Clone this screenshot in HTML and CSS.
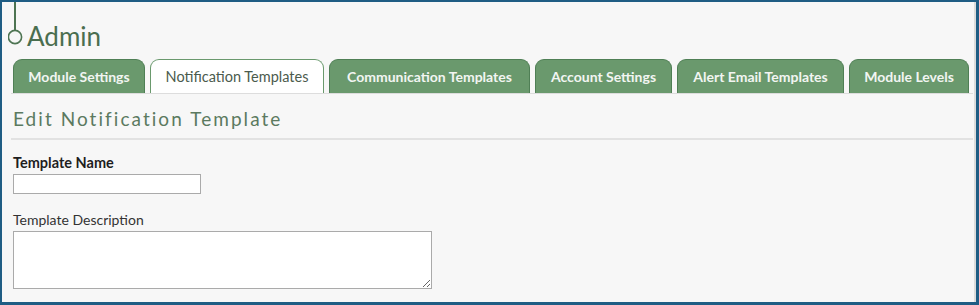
FILE: index.html
```html
<!DOCTYPE html>
<html>
<head>
<meta charset="utf-8">
<link rel="stylesheet" href="styles.css">
</head>
<body>
<div class="frame">
  <header class="title-row">
    <svg class="marker" width="16" height="44" viewBox="0 0 16 44">
      <line x1="7" y1="0" x2="7" y2="28" stroke="#4d7452" stroke-width="2"/>
      <circle cx="7" cy="35" r="6.6" fill="none" stroke="#4d7452" stroke-width="1.6"/>
    </svg>
    <h1 class="title">Admin</h1>
  </header>
  <nav class="tabs">
    <div class="tab">Module Settings</div>
    <div class="tab active">Notification Templates</div>
    <div class="tab">Communication Templates</div>
    <div class="tab">Account Settings</div>
    <div class="tab">Alert Email Templates</div>
    <div class="tab">Module Levels</div>
  </nav>
  <h2 class="section-title">Edit Notification Template</h2>
  <form class="form">
    <label class="field-label bold">Template Name</label>
    <input class="text-input" type="text">
    <label class="field-label">Template Description</label>
    <textarea class="text-area"></textarea>
  </form>
</div>
</body>
</html>
```
FILE: styles.css
```css
html, body {
  margin: 0;
  padding: 0;
  background: #f7f7f7;
}
.frame {
  box-sizing: border-box;
  width: 979px;
  height: 305px;
  border-style: solid;
  border-color: #1f5d84;
  border-width: 2px 3px 3px 2px;
  background: #f7f7f7;
  box-shadow: inset -2px 0 0 #dcdcdc;
  font-family: "Lato", "Open Sans", sans-serif;
  overflow: hidden;
}
.title-row {
  display: flex;
  align-items: flex-start;
  padding-left: 6px;
  height: 57px;
}
.marker {
  display: block;
}
.title {
  margin: 19px 0 0 3px;
  font-size: 26px;
  font-weight: 400;
  color: #4a6e4f;
  line-height: 30px;
}
.tabs {
  display: flex;
  gap: 5px;
  margin-left: 9px;
  margin-right: 3px;
  padding-left: 2px;
  border-bottom: 1px solid #dddddd;
  height: 34px;
}
.tab {
  box-sizing: border-box;
  height: 34px;
  display: flex;
  align-items: center;
  justify-content: center;
  background: #6a996d;
  border: 1px solid #4f7f55;
  border-bottom: none;
  border-radius: 9px 9px 0 0;
  color: #f2f5f2;
  font-size: 14px;
  font-weight: 700;
  white-space: nowrap;
}
.tab:nth-child(1) { width: 132px; }
.tab:nth-child(2) { width: 174px; }
.tab:nth-child(3) { width: 201px; }
.tab:nth-child(4) { width: 137px; }
.tab:nth-child(5) { width: 167px; }
.tab:nth-child(6) { width: 120px; }
.tab.active {
  background: #ffffff;
  border-color: #6a996d;
  color: #4b5b4d;
  font-weight: 400;
  font-size: 14.5px;
}
.section-title {
  margin: 0 3px 0 9px;
  padding: 14px 0 8px 2px;
  border-bottom: 2px solid #e2e2e2;
  font-size: 19px;
  font-weight: 400;
  letter-spacing: 2.05px;
  color: #5b7a60;
  line-height: 22px;
}
.form {
  display: flex;
  flex-direction: column;
  align-items: flex-start;
  padding: 14px 0 0 11px;
}
.field-label {
  font-size: 14px;
  color: #333;
  line-height: 17px;
}
.field-label.bold {
  font-size: 14.5px;
  font-weight: 700;
  color: #1e1e1e;
}
.text-input {
  box-sizing: border-box;
  margin: 3px 0 17px;
  width: 188px;
  height: 20px;
  border: 1px solid #aaaaaa;
  background: #fff;
  padding: 0;
}
.text-area {
  box-sizing: border-box;
  margin: 3px 0 0;
  width: 419px;
  height: 58px;
  border: 1px solid #aaaaaa;
  background: #fff;
  padding: 0;
  resize: both;
}
```
